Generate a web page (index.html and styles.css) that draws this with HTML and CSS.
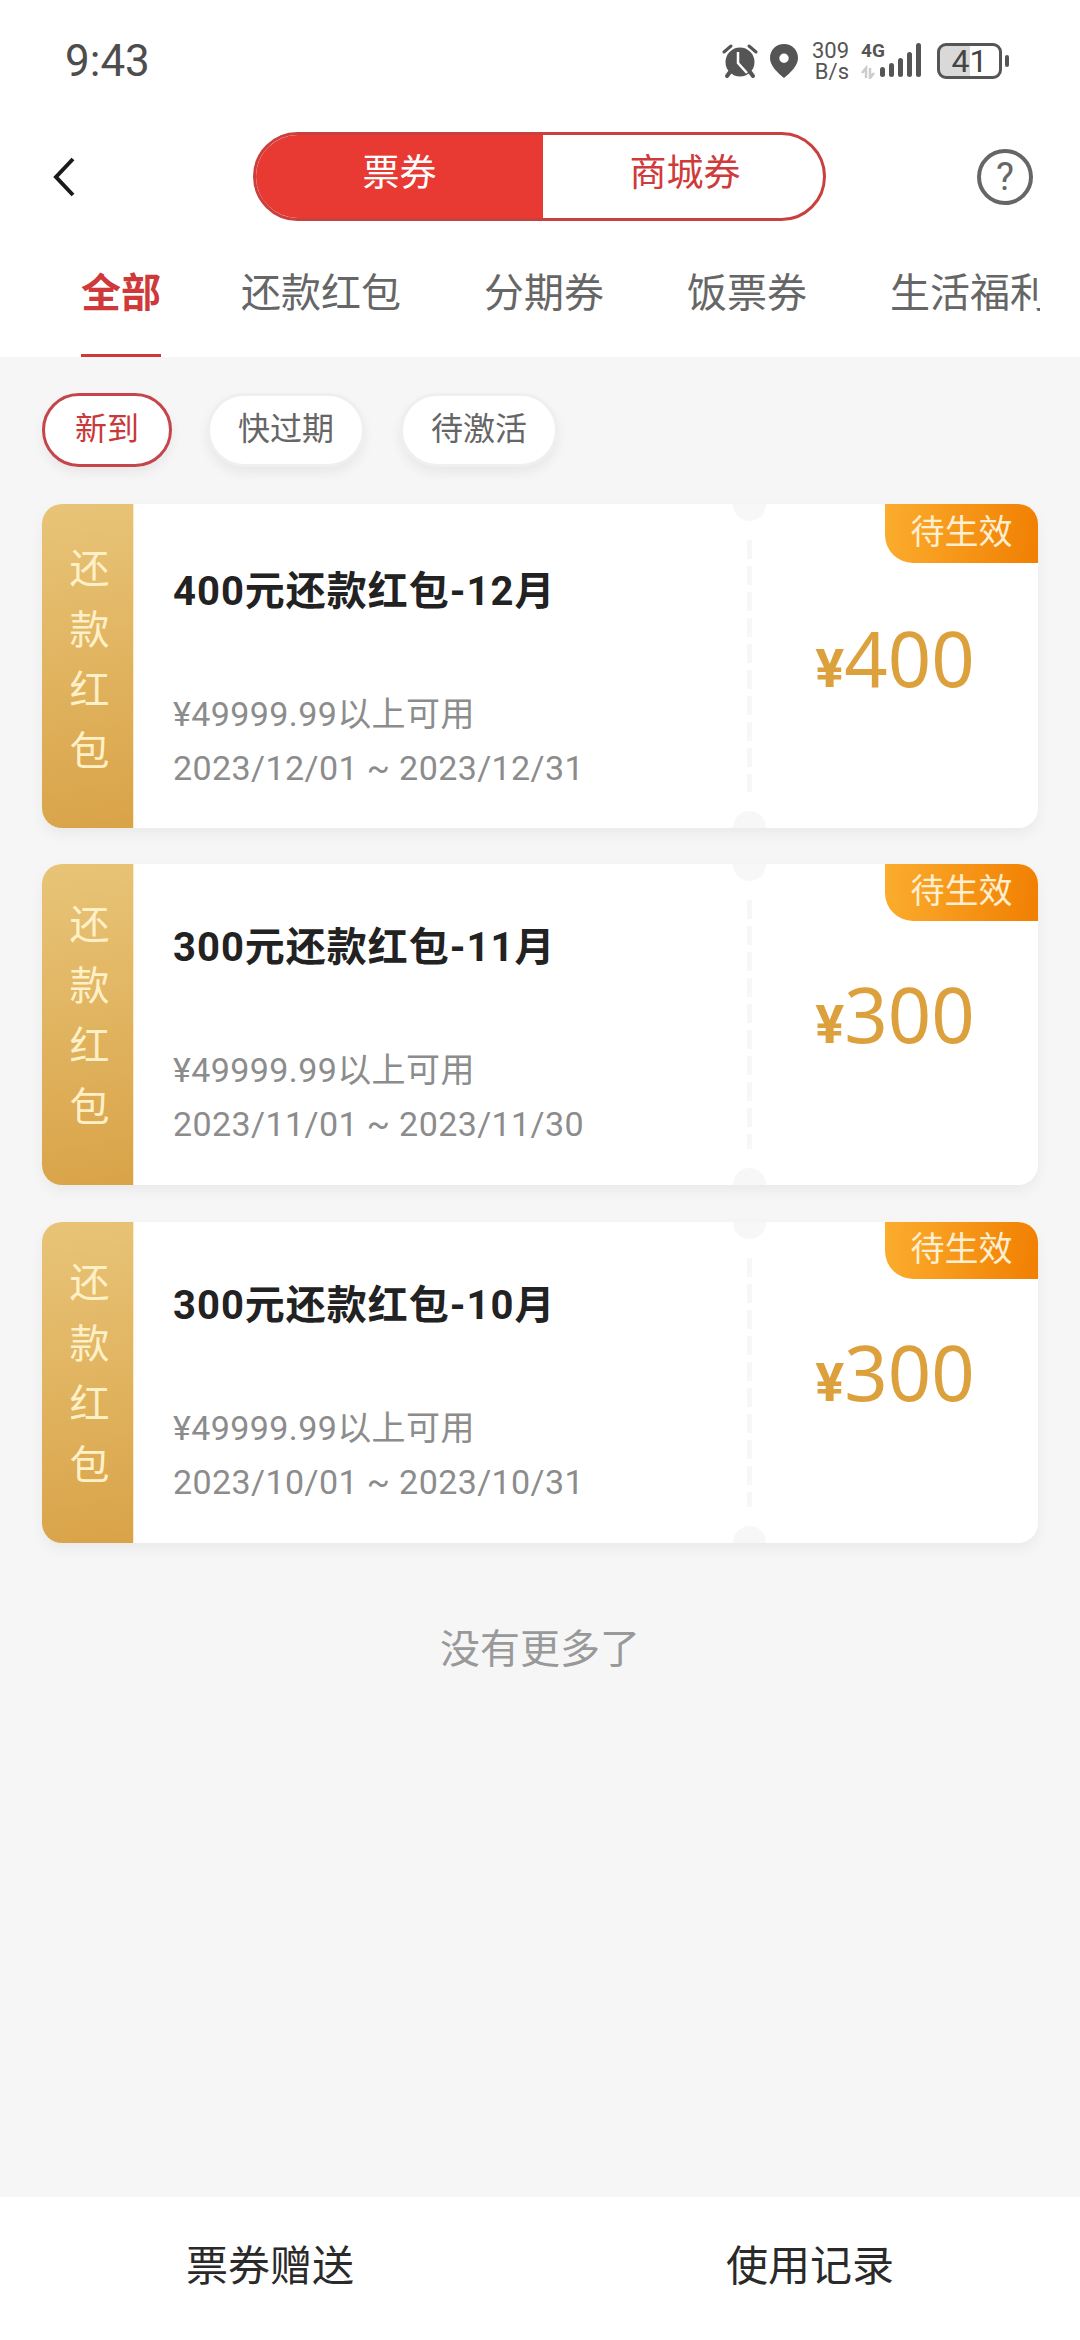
FILE: index.html
```html
<!DOCTYPE html>
<html lang="zh-CN">
<head>
  <meta charset="UTF-8" />
  <meta name="viewport" content="width=device-width, initial-scale=1.0" />
  <title>票券</title>
  <link rel="stylesheet" href="styles.css">
</head>
<body>
  <div class="page">
    <header class="top">
      <div class="status-bar">
        <span class="time">9:43</span>
        <div class="status-icons">
          <svg class="icon-alarm" viewBox="0 0 36 36" width="36" height="36">
            <path d="M2 9 9 3M34 9 27 3" stroke="#555" stroke-width="3" stroke-linecap="round" fill="none"/>
            <path d="M8 29 5 33M28 29l3 4" stroke="#555" stroke-width="4" stroke-linecap="round" fill="none"/>
            <circle cx="18" cy="19" r="14.5" fill="#555"/>
            <path d="M16 9v11l9 10" stroke="#fff" stroke-width="2.5" fill="none"/>
          </svg>
          <svg class="icon-pin" viewBox="0 0 28 34" width="28" height="34">
            <path fill-rule="evenodd" fill="#555" d="M14 0C6 0 0 6 0 14c0 8 8 15 14 20 6-5 14-12 14-20C28 6 22 0 14 0Zm0 9.500a4.700 4.700 0 1 1 0 9.400 4.700 4.700 0 0 1 0-9.400Z"/>
          </svg>
          <div class="speed"><span>309</span><span>B/s</span></div>
          <div class="signal">
            <span class="signal-label">4G</span>
            <svg viewBox="0 0 64 36" width="64" height="36">
              <path d="M5 35V25L1 30M9 25V35L13 30" stroke="#ccc" stroke-width="2.500" fill="none"/>
              <rect x="19" y="24" width="5" height="10" rx="2.500" fill="#555"/>
              <rect x="28" y="20" width="5" height="14" rx="2.500" fill="#555"/>
              <rect x="37" y="15" width="5" height="19" rx="2.500" fill="#555"/>
              <rect x="46" y="9" width="5" height="25" rx="2.500" fill="#555"/>
              <rect x="55" y="0" width="5" height="34" rx="2.500" fill="#555"/>
            </svg>
          </div>
          <div class="battery">
            <div class="battery-body"><span class="battery-level">41</span></div>
            <span class="battery-nub"></span>
          </div>
        </div>
      </div>

      <nav class="nav">
        <svg class="back" viewBox="0 0 24 40" width="24" height="40">
          <path d="M21 2 4 20l17 18" stroke="#1a1a1a" stroke-width="4" fill="none"/>
        </svg>
        <div class="switch">
          <span class="switch-item active">票券</span>
          <span class="switch-item">商城券</span>
        </div>
        <span class="help">?</span>
      </nav>

      <div class="tabs">
        <span class="tab active">全部</span>
        <span class="tab">还款红包</span>
        <span class="tab">分期券</span>
        <span class="tab">饭票券</span>
        <span class="tab">生活福利</span>
      </div>
    </header>

    <main class="content">
      <div class="chips">
        <span class="chip active">新到</span>
        <span class="chip">快过期</span>
        <span class="chip">待激活</span>
      </div>

      <div class="tickets">
        <div class="ticket">
          <div class="ticket-side"><span>还</span><span>款</span><span>红</span><span>包</span></div>
          <div class="ticket-body">
            <div class="ticket-title">400元还款红包-12月</div>
            <div class="ticket-meta">¥49999.99以上可用</div>
            <div class="ticket-meta">2023/12/01 ~ 2023/12/31</div>
          </div>
          <div class="ticket-cut"></div>
          <div class="ticket-price"><span class="yen">¥</span>400</div>
          <span class="badge">待生效</span>
        </div>

        <div class="ticket">
          <div class="ticket-side"><span>还</span><span>款</span><span>红</span><span>包</span></div>
          <div class="ticket-body">
            <div class="ticket-title">300元还款红包-11月</div>
            <div class="ticket-meta">¥49999.99以上可用</div>
            <div class="ticket-meta">2023/11/01 ~ 2023/11/30</div>
          </div>
          <div class="ticket-cut"></div>
          <div class="ticket-price"><span class="yen">¥</span>300</div>
          <span class="badge">待生效</span>
        </div>

        <div class="ticket">
          <div class="ticket-side"><span>还</span><span>款</span><span>红</span><span>包</span></div>
          <div class="ticket-body">
            <div class="ticket-title">300元还款红包-10月</div>
            <div class="ticket-meta">¥49999.99以上可用</div>
            <div class="ticket-meta">2023/10/01 ~ 2023/10/31</div>
          </div>
          <div class="ticket-cut"></div>
          <div class="ticket-price"><span class="yen">¥</span>300</div>
          <span class="badge">待生效</span>
        </div>
      </div>

      <p class="no-more">没有更多了</p>
    </main>

    <footer class="footer">
      <span>票券赠送</span>
      <span>使用记录</span>
    </footer>
  </div>
</body>
</html>
```

FILE: styles.css
```css
* {
  margin: 0;
  padding: 0;
  box-sizing: border-box;
}

body {
  background: #f6f6f7;
  color: #333;
  font-family: Roboto, "Noto Sans CJK SC", sans-serif;
}

.page {
  display: flex;
  flex-direction: column;
  height: 2340px;
  overflow: hidden;
}

/* header */
.top {
  background: #fff;
}

.status-bar {
  display: flex;
  justify-content: space-between;
  align-items: center;
  height: 122px;
  padding: 0 71px 0 65px;
}

.time {
  font-size: 44px;
  color: #4d4d4d;
}

.status-icons {
  display: flex;
  align-items: center;
  gap: 12px;
}

.speed {
  display: flex;
  flex-direction: column;
  width: 39px;
  font-size: 22px;
  line-height: 21px;
  color: #555;
  text-align: right;
}

.signal {
  position: relative;
  width: 64px;
  height: 36px;
}

.signal-label {
  position: absolute;
  left: 0;
  top: 0;
  font-size: 19px;
  line-height: 16px;
  font-weight: 700;
  color: #555;
}

.battery {
  display: flex;
  align-items: center;
  gap: 3px;
}

.battery-body {
  width: 65px;
  height: 36px;
  border: 3px solid #555;
  border-radius: 9px;
  background: linear-gradient(90deg, #d9d9d9 50%, #fff 50%);
  overflow: hidden;
}

.battery-level {
  display: block;
  font-size: 32px;
  line-height: 30px;
  text-align: center;
  color: #444;
}

.battery-nub {
  width: 4px;
  height: 12px;
  border-radius: 2px;
  background: #555;
}

.nav {
  display: grid;
  grid-template-columns: 253px 573px 1fr;
  align-items: center;
  margin-top: 10px;
}

.back {
  margin-left: 52px;
}

.switch {
  display: flex;
  height: 89px;
  border: 3px solid #c9413f;
  border-radius: 45px;
  overflow: hidden;
}

.switch-item {
  flex: 1;
  padding-left: 4px;
  text-align: center;
  font-size: 37px;
  line-height: 78px;
  color: #cf3a3a;
}

.switch-item.active {
  flex: 0 0 287px;
  padding-left: 0;
  background: #e83a33;
  color: #fff;
}

.help {
  justify-self: end;
  width: 56px;
  height: 56px;
  margin-right: 47px;
  border: 4px solid #666;
  border-radius: 50%;
  font-size: 38px;
  line-height: 48px;
  text-align: center;
  color: #666;
}

.tabs {
  display: flex;
  gap: 83px;
  height: 136px;
  margin-right: 40px;
  padding-left: 81px;
  overflow: hidden;
}

.tab {
  flex-shrink: 0;
  height: 136px;
  padding-top: 47px;
  font-size: 40px;
  line-height: 52px;
  color: #666;
}

.tab.active {
  margin-right: -3px;
  border-bottom: 3px solid #d0393a;
  font-weight: 700;
  color: #d0393a;
}

/* content */
.content {
  flex: 1;
  padding: 36px 42px 0;
}

.chips {
  display: flex;
  align-items: center;
  gap: 35px;
}

.chip {
  height: 74px;
  padding: 0 28px;
  border: 3px solid #efefef;
  border-radius: 37px;
  background: #fff;
  box-shadow: 0 6px 12px rgba(0, 0, 0, 0.06);
  font-size: 32px;
  line-height: 66px;
  color: #666;
}

.chip.active {
  padding: 0 30px;
  border-color: #c4454a;
  color: #c8393c;
}

.tickets {
  display: flex;
  flex-direction: column;
  gap: 37px;
  margin-top: 37px;
}

.ticket {
  position: relative;
  display: flex;
  height: 321px;
  border-radius: 20px;
  background: #fff;
  box-shadow: 0 6px 14px rgba(0, 0, 0, 0.05);
  overflow: hidden;
}

.ticket:first-child {
  height: 324px;
  margin-bottom: -1px;
}

.ticket-side {
  display: flex;
  flex-direction: column;
  align-items: center;
  justify-content: center;
  width: 92px;
  padding: 0 0 15px 4px;
  border-right: 1px solid #fbe9c4;
  background: linear-gradient(170deg, #e8c478, #d9a348);
  font-size: 40px;
  line-height: 60.5px;
  color: #fff0c8;
}

.ticket:first-child .ticket-side {
  padding-bottom: 10px;
}

.ticket-body {
  width: 613px;
  padding: 56px 0 0 39px;
  color: #8c8c8c;
}

.ticket:first-child .ticket-body {
  padding-top: 60px;
}

.ticket-title {
  margin-bottom: 67px;
  font-size: 40px;
  line-height: 56px;
  font-weight: 700;
  letter-spacing: 1px;
  color: #222;
}

.ticket-meta {
  font-size: 34px;
  line-height: 54px;
  letter-spacing: 0.4px;
}

/* perforation between body and price */
.ticket-cut {
  position: relative;
  width: 5px;
  margin: 36px 0;
  background: repeating-linear-gradient(180deg, #f7f7f8 0 19px, transparent 19px 26px);
}

.ticket-cut::before,
.ticket-cut::after {
  content: "";
  position: absolute;
  left: -14px;
  width: 33px;
  height: 33px;
  border-radius: 50%;
  background: #f7f7f8;
}

.ticket-cut::before {
  top: -52px;
}

.ticket-cut::after {
  bottom: -52px;
}

.ticket-price {
  flex: 1;
  padding-bottom: 10px;
  text-align: center;
  align-self: center;
  font-family: "Noto Sans", sans-serif;
  font-size: 76px;
  line-height: 100px;
  color: #dca03c;
}

.ticket:first-child .ticket-price {
  padding-bottom: 6px;
}

.yen {
  font-family: Roboto, sans-serif;
  font-size: 54px;
  font-weight: 700;
}

.badge {
  position: absolute;
  top: 0;
  right: 0;
  width: 153px;
  height: 57px;
  border-bottom-left-radius: 28px;
  background: linear-gradient(95deg, #fbad2e, #f17f02);
  font-size: 34px;
  line-height: 54px;
  text-align: center;
  color: #ffefd0;
}

.ticket:first-child .badge {
  height: 59px;
  line-height: 56px;
}

.no-more {
  margin-top: 79px;
  font-size: 40px;
  line-height: 56px;
  text-align: center;
  color: #999;
}

.footer {
  display: grid;
  grid-template-columns: 1fr 1fr;
  height: 143px;
  background: #fff;
  font-size: 42px;
  line-height: 140px;
  text-align: center;
  color: #2a2a2a;
}
```
